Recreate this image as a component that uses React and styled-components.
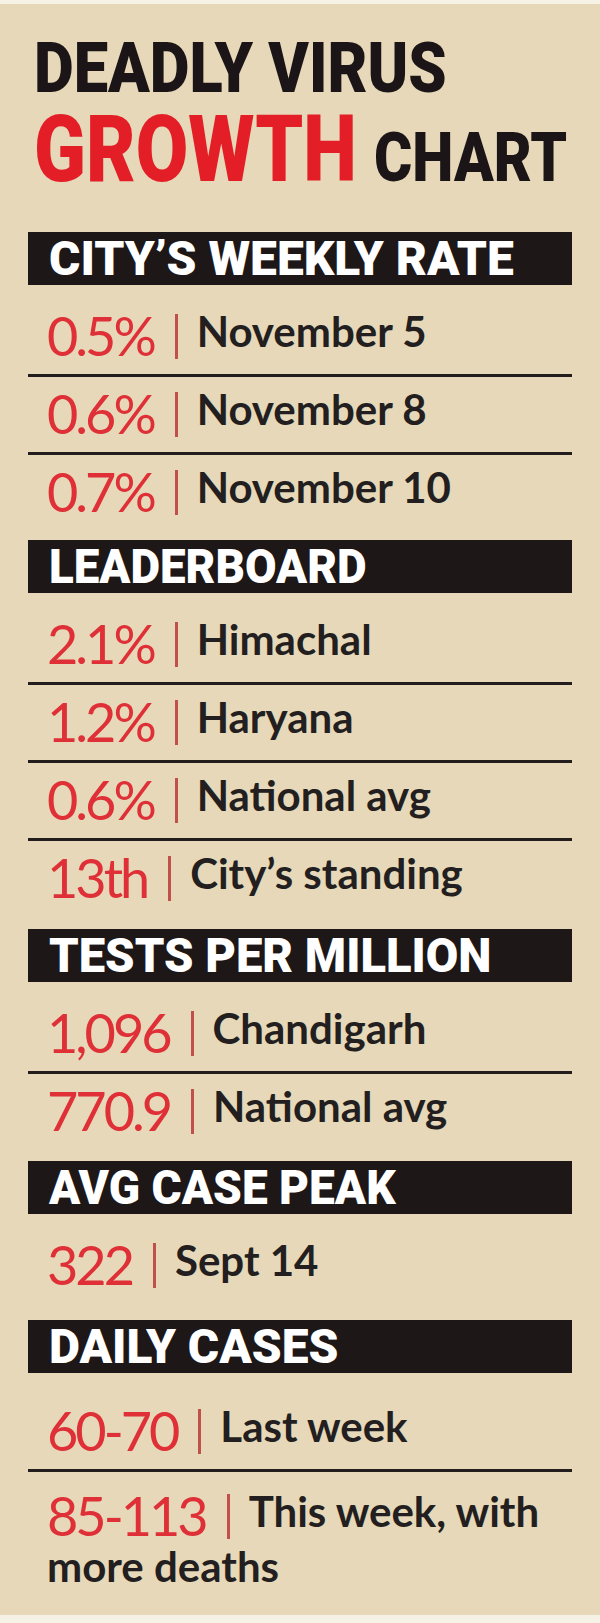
import React, { useLayoutEffect, useRef, useState } from "react";
import styled, { createGlobalStyle } from "styled-components";

const GlobalStyle = createGlobalStyle`
  html, body {
    margin: 0;
    padding: 0;
    background: #f7f2e6;
  }
`;

const Sheet = styled.main`
  box-sizing: border-box;
  width: 600px;
  margin-top: 4px;
  padding: 29px 28px 13px;
  background: #e6d8b8;
`;

// heavy condensed type is faked by squeezing a black grotesque to a set width
const FitBox = styled.span`
  display: inline-block;
  width: ${(p) => p.$width}px;
  margin-right: ${(p) => p.$gap || 0}px;
  white-space: nowrap;
`;

const FitInner = styled.span`
  display: inline-block;
  transform-origin: 0 50%;
`;

const FitText = ({ width, gap, children }) => {
  const ref = useRef(null);
  const [scale, setScale] = useState(1);

  useLayoutEffect(() => {
    const measure = () => {
      const w = ref.current && ref.current.offsetWidth;
      if (w) setScale(width / w);
    };
    measure();
    if (document.fonts && document.fonts.ready) document.fonts.ready.then(measure);
  }, [width, children]);

  return (
    <FitBox $width={width} $gap={gap}>
      <FitInner ref={ref} style={{ transform: `scaleX(${scale})` }}>
        {children}
      </FitInner>
    </FitBox>
  );
};

const Headline = styled.h1`
  margin: 0 0 36px 6px;
  font-family: Roboto, Inter, "Liberation Sans", sans-serif;
  font-weight: 900;
  text-transform: uppercase;
  color: #1b1517;
`;

const HeadLine = styled.div`
  font-size: ${(p) => p.$size}px;
  line-height: 1;
  white-space: nowrap;
`;

const Word = styled.span`
  color: ${(p) => (p.$red ? "#e41e26" : "#1b1517")};
  font-size: ${(p) => p.$size}px;
`;

const Section = styled.section`
  padding-bottom: ${(p) => p.$pad}px;
`;

const Bar = styled.h2`
  box-sizing: border-box;
  margin: 0 0 14px;
  height: 53px;
  padding: 1px 0 0 21px;
  background: #1d1718;
  color: #fff;
  font-family: Roboto, Inter, "Liberation Sans", sans-serif;
  font-weight: 900;
  font-size: 48px;
  line-height: 52px;
  white-space: nowrap;
  overflow: hidden;
`;

const Row = styled.div`
  padding: ${(p) => p.$top}px 0 11px 19px;
  min-height: 57px;
  font-family: Lato, "Noto Sans", sans-serif;
  font-weight: 700;
  font-size: 42px;
  line-height: 50px;
  color: #231f20;

  & + & {
    border-top: 3px solid #231d1d;
  }
`;

const Value = styled.span`
  font-weight: 400;
  font-size: 54px;
  letter-spacing: -3px;
  color: #df2f37;
  vertical-align: middle;
`;

const Pipe = styled.span`
  display: inline-block;
  width: 3px;
  height: 45px;
  margin: 0 19px 0 21px;
  background: #c0504a;
  vertical-align: middle;
`;

const SECTIONS = [
  {
    title: "CITY’S WEEKLY RATE",
    width: 465,
    pad: 10,
    top: 7,
    rows: [
      ["0.5%", "November 5"],
      ["0.6%", "November 8"],
      ["0.7%", "November 10"],
    ],
  },
  {
    title: "LEADERBOARD",
    width: 318,
    pad: 13,
    top: 7,
    rows: [
      ["2.1%", "Himachal"],
      ["1.2%", "Haryana"],
      ["0.6%", "National avg"],
      ["13th", "City’s standing"],
    ],
  },
  {
    title: "TESTS PER MILLION",
    width: 442,
    pad: 12,
    top: 7,
    rows: [
      ["1,096", "Chandigarh"],
      ["770.9", "National avg"],
    ],
  },
  {
    title: "AVG CASE PEAK",
    width: 347,
    pad: 17,
    top: 7,
    rows: [["322", "Sept 14"]],
  },
  {
    title: "DAILY CASES",
    width: 289,
    pad: 0,
    top: 14,
    rows: [
      ["60-70", "Last week"],
      ["85-113", "This week, with more deaths"],
    ],
  },
];

const App = () => {
  return (
    <>
      <GlobalStyle />
      <Sheet>
        <Headline>
          <HeadLine $size={70}>
            <FitText width={413}>Deadly virus</FitText>
          </HeadLine>
          <HeadLine $size={93}>
            <Word $red $size={93}>
              <FitText width={323} gap={17}>
                Growth
              </FitText>
            </Word>
            <Word $size={69}>
              <FitText width={193}>Chart</FitText>
            </Word>
          </HeadLine>
        </Headline>
        {SECTIONS.map((s) => (
          <Section key={s.title} $pad={s.pad}>
            <Bar>
              <FitText width={s.width}>{s.title}</FitText>
            </Bar>
            {s.rows.map(([value, label]) => (
              <Row key={value + label} $top={s.top}>
                <Value>{value}</Value>
                <Pipe />
                {label}
              </Row>
            ))}
          </Section>
        ))}
      </Sheet>
    </>
  );
};

export default App;
